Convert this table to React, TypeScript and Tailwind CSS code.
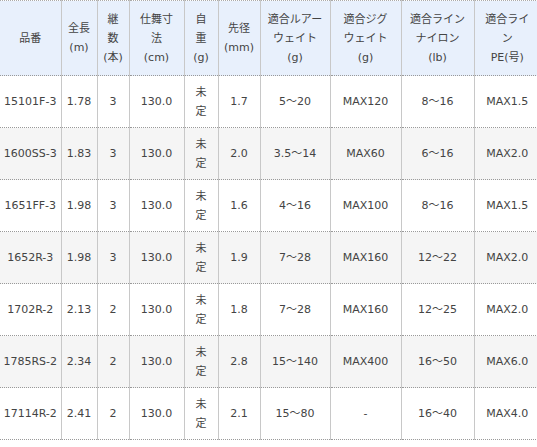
const headers: string[][] = [
  ['品番'],
  ['全長', '(m)'],
  ['継', '数', '(本)'],
  ['仕舞寸', '法', '(cm)'],
  ['自', '重', '(g)'],
  ['先径', '(mm)'],
  ['適合ルアー', 'ウェイト', '(g)'],
  ['適合ジグ', 'ウェイト', '(g)'],
  ['適合ライン', 'ナイロン', '(lb)'],
  ['適合ライ', 'ン', 'PE(号)'],
];

const widths = ['w-[61px]', 'w-[36px]', 'w-[32px]', 'w-[55px]', 'w-[34px]', 'w-[42px]', 'w-[70px]', 'w-[71px]', 'w-[73px]', 'w-[66px]'];

const rows: string[][] = [
  ['15101F-3', '1.78', '3', '130.0', '未定', '1.7', '5～20', 'MAX120', '8～16', 'MAX1.5'],
  ['1600SS-3', '1.83', '3', '130.0', '未定', '2.0', '3.5～14', 'MAX60', '6～16', 'MAX2.0'],
  ['1651FF-3', '1.98', '3', '130.0', '未定', '1.6', '4～16', 'MAX100', '8～16', 'MAX1.5'],
  ['1652R-3', '1.98', '3', '130.0', '未定', '1.9', '7～28', 'MAX160', '12～22', 'MAX2.0'],
  ['1702R-2', '2.13', '2', '130.0', '未定', '1.8', '7～28', 'MAX160', '12～25', 'MAX2.0'],
  ['1785RS-2', '2.34', '2', '130.0', '未定', '2.8', '15～140', 'MAX400', '16～50', 'MAX6.0'],
  ['17114R-2', '2.41', '2', '130.0', '未定', '2.1', '15～80', '-', '16～40', 'MAX4.0'],
];

export default function App() {
  return (
    <div
      className="w-[537px] h-[447px] overflow-hidden bg-white text-[#444] text-[11px] leading-[19px]"
      style={{ fontFamily: '"DejaVu Sans", "Noto Sans CJK JP", sans-serif' }}
    >
      <table className="table-fixed border-collapse w-[540px]">
        <thead>
          <tr className="bg-[#e8f0fc]">
            {headers.map((lines, i) => (
              <th
                key={i}
                className={`${widths[i]} h-[75px] p-0 font-normal text-center align-middle border-t border-t-[#aaa] border-dotted border-b border-b-[#999] ${
                  i > 0 ? 'border-l border-l-[#c8c8c8] [border-left-style:solid]' : ''
                }`}
              >
                {lines.map((l, j) => (
                  <div key={j} className="whitespace-nowrap">{l}</div>
                ))}
              </th>
            ))}
          </tr>
        </thead>
        <tbody>
          {rows.map((r, ri) => (
            <tr key={ri} className={ri % 2 === 1 ? 'bg-[#f5f5f5]' : 'bg-white'}>
              {r.map((c, ci) => (
                <td
                  key={ci}
                  className={`h-[52px] p-0 text-center align-middle border-b border-dotted border-b-[#999] ${
                    ci > 0 ? 'border-l border-l-[#c8c8c8] [border-left-style:solid]' : ''
                  }`}
                >
                  {c === '未定' ? (
                    <>
                      <div>未</div>
                      <div>定</div>
                    </>
                  ) : (
                    <span className="whitespace-nowrap">{c}</span>
                  )}
                </td>
              ))}
            </tr>
          ))}
        </tbody>
      </table>
    </div>
  );
}
